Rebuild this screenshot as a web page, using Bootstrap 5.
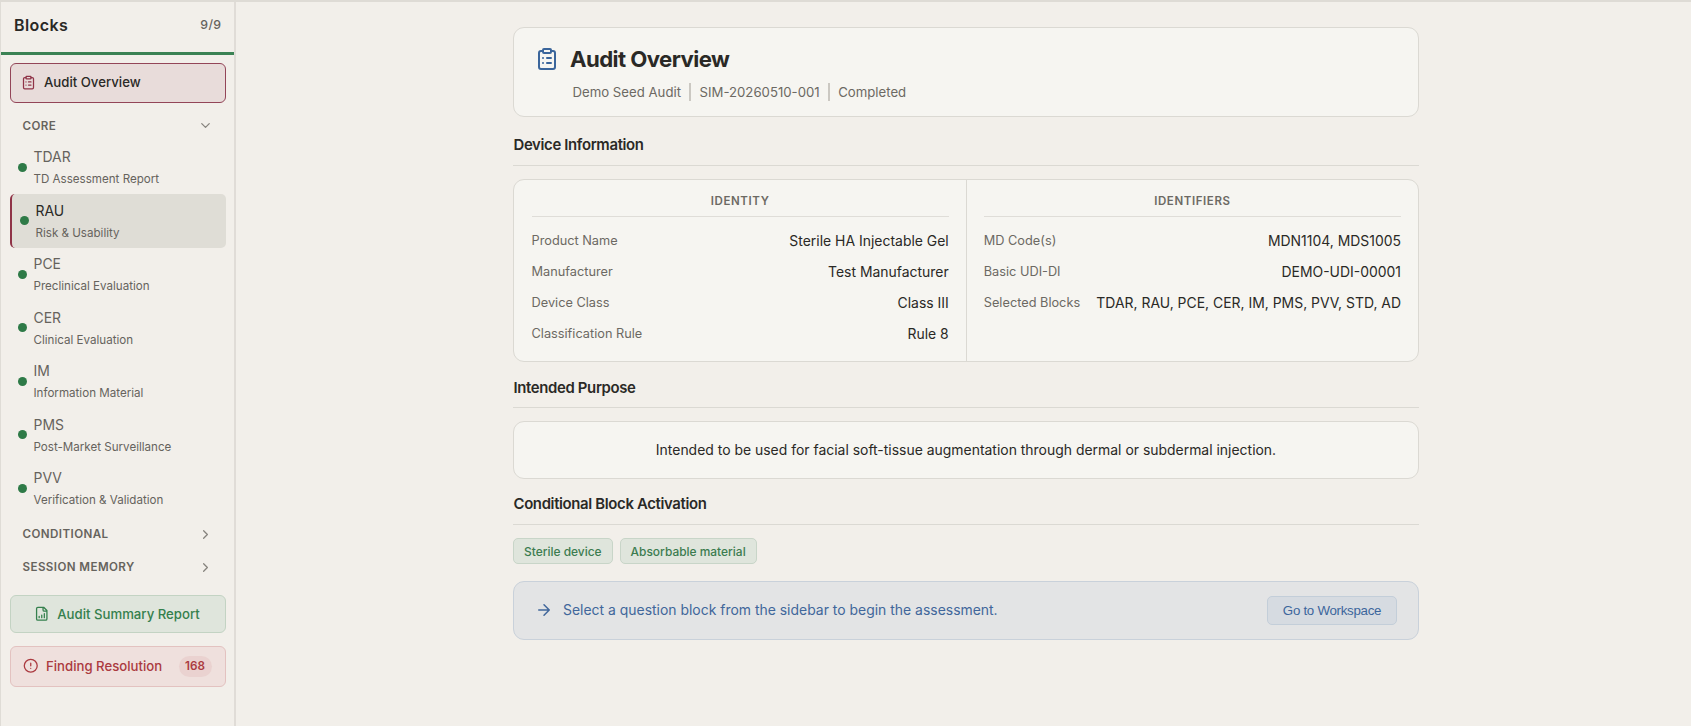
<!DOCTYPE html>
<html lang="en">
<head>
<meta charset="utf-8">
<title>Audit Overview</title>
<link rel="stylesheet" href="https://cdn.jsdelivr.net/npm/bootstrap@5.3.0/dist/css/bootstrap.min.css">
<style>
  :root { --line:#dbd9d3; --ink:#2a2926; --muted:#66635d; --green:#2e7a47; --wine:#8f3347; --blue:#3a659b; }
  body { font-family:Inter,sans-serif; font-size:13.95px; line-height:20px; color:var(--ink); background:#f2efea; height:726px; border-top:2px solid #dedbd5; overflow:hidden; }
  svg { fill:none; stroke:currentColor; stroke-width:2; stroke-linecap:round; stroke-linejoin:round; flex:none; display:block; }
  .sidebar { width:235.5px; border-left:1px solid #dfdcd6; border-right:2px solid #e0dcd7; }
  .side-head { height:53px; padding:0 12px 5px 13px; border-bottom:3px solid #3b8254; }
  .side-head h1 { font-size:16px; font-weight:600; letter-spacing:.4px; line-height:20px; }
  .count { font-size:12.3px; font-weight:500; letter-spacing:.4px; color:var(--muted); }
  .side-body { padding:8px 8px 0 9px; }
  .pill-link { border:1px solid; border-radius:6px; font-size:13.2px; font-weight:500; }
  .overview { height:40px; background:#e8dcda; border-color:#934558; padding:0 0 2px 10px; gap:8px; margin-bottom:8px; }
  .overview svg, .wine { color:var(--wine); }
  .group { height:33px; padding:0 13px 0 12.5px; font-size:11.6px; font-weight:600; letter-spacing:.42px; color:var(--muted); }
  .group.open { height:29.5px; }
  .group svg { color:#86837d; }
  .block-list { margin-bottom:2.5px; }
  .block-item { height:53.5px; padding:0 0 0 8px; gap:6.5px; color:var(--muted); border-radius:5px; }
  .block-item .dot { width:9px; height:9px; border-radius:50%; background:var(--green); flex:none; }
  .block-item .code { font-size:13.95px; line-height:20px; margin-top:.6px; }
  .block-item .desc { font-size:11.6px; line-height:18px; margin-top:3px; }
  .block-item.current { background:#dfddd6; border-left:2px solid var(--wine); }
  .block-item.current .code { color:var(--ink); }
  .report { height:38px; margin-top:11px; background:#dfe5dc; border-color:#c3d3c3; color:#35804d; padding-right:1.5px; gap:7.5px; }
  .finding { height:41px; margin-top:13px; background:#efe0dd; border-color:#e3c2c0; color:#ab3a40; padding:0 13px 0 12px; gap:7.5px; }
  .total { background:#ead2d0; border-radius:11px; height:21px; line-height:21px; width:33px; font-size:11.7px; font-weight:600; }
  .page { width:906px; margin-left:277.5px; padding-top:25px; }
  .panel { background:#f6f5f1; border:1px solid var(--line); border-radius:11px; }
  .hero { height:90px; padding:18px 21px; }
  .hero h2 { font-size:22.2px; font-weight:700; letter-spacing:-.58px; line-height:26px; margin:0 0 0 11px; }
  .hero svg { color:var(--blue); }
  .meta { font-size:13.2px; color:#6c6963; margin:11px 0 0 37.5px; line-height:18px; }
  .meta span + span { border-left:2px solid #cbc8c2; margin-left:8.3px; padding-left:8.2px; }
  .section-title { font-size:14.9px; font-weight:600; letter-spacing:-.34px; line-height:20px; border-bottom:1px solid var(--line); margin:0; text-indent:.5px; }
  .facts > div { flex:1 1 0; padding:11px 17px 0 17.5px; }
  .facts > div + div { border-left:1px solid var(--line); padding:11px 17px 0; }
  .facts h4 { font-size:11.5px; font-weight:600; letter-spacing:.6px; color:#6c6963; text-align:center; line-height:20px; padding-bottom:5px; border-bottom:1px solid #dfddd8; margin-bottom:8px; }
  .fact { height:31px; }
  .fact dt { font-size:12.75px; font-weight:400; color:#6c6963; }
  .fact dd { margin:0; }
  .chip { height:26px; line-height:25px; border:1px solid #c8d5c8; border-radius:5px; background:#dfe5dc; color:#3c7c50; font-size:11.95px; font-weight:500; padding:0 10px; }
  .banner { height:58.5px; margin-top:17px; padding:0 21px; background:#e3e4e5; border:1px solid #c9d1da; border-radius:11px; color:#41679b; }
  .go { height:29px; width:130px; padding:0; background:#d6dbe1; border:1px solid #c3ced9; border-radius:5px; color:#3c669c; font:13.3px/27px "Liberation Sans",sans-serif; letter-spacing:-.28px; }
</style>
</head>
<body>
<div class="d-flex h-100">
  <nav class="sidebar flex-shrink-0">
    <div class="side-head d-flex align-items-center justify-content-between">
      <h1 class="m-0">Blocks</h1><span class="count">9/9</span>
    </div>
    <div class="side-body">
      <a class="pill-link overview d-flex align-items-center text-reset text-decoration-none">
        <svg width="15" height="15" viewBox="0 0 24 24"><rect x="8" y="2" width="8" height="4" rx="1"/><path d="M16 4h2a2 2 0 0 1 2 2v14a2 2 0 0 1-2 2H6a2 2 0 0 1-2-2V6a2 2 0 0 1 2-2h2M12 11h4M12 16h4M8 11h.01M8 16h.01"/></svg>
        Audit Overview
      </a>
      <div class="group open d-flex align-items-center justify-content-between">CORE
        <svg width="15" height="15" viewBox="0 0 24 24"><path d="m6 9 6 6 6-6"/></svg></div>
      <div class="block-list">
        <div class="block-item d-flex align-items-center"><i class="dot"></i><div><div class="code">TDAR</div><div class="desc">TD Assessment Report</div></div></div>
        <div class="block-item current d-flex align-items-center"><i class="dot"></i><div><div class="code">RAU</div><div class="desc">Risk &amp; Usability</div></div></div>
        <div class="block-item d-flex align-items-center"><i class="dot"></i><div><div class="code">PCE</div><div class="desc">Preclinical Evaluation</div></div></div>
        <div class="block-item d-flex align-items-center"><i class="dot"></i><div><div class="code">CER</div><div class="desc">Clinical Evaluation</div></div></div>
        <div class="block-item d-flex align-items-center"><i class="dot"></i><div><div class="code">IM</div><div class="desc">Information Material</div></div></div>
        <div class="block-item d-flex align-items-center"><i class="dot"></i><div><div class="code">PMS</div><div class="desc">Post-Market Surveillance</div></div></div>
        <div class="block-item d-flex align-items-center"><i class="dot"></i><div><div class="code">PVV</div><div class="desc">Verification &amp; Validation</div></div></div>
      </div>
      <div class="group d-flex align-items-center justify-content-between">CONDITIONAL
        <svg width="15" height="15" viewBox="0 0 24 24"><path d="m9 18 6-6-6-6"/></svg></div>
      <div class="group d-flex align-items-center justify-content-between">SESSION MEMORY
        <svg width="15" height="15" viewBox="0 0 24 24"><path d="m9 18 6-6-6-6"/></svg></div>
      <a class="pill-link report d-flex align-items-center justify-content-center text-decoration-none">
        <svg width="15.5" height="15.5" viewBox="0 0 24 24"><path d="M15 2H6a2 2 0 0 0-2 2v16a2 2 0 0 0 2 2h12a2 2 0 0 0 2-2V7zM14 2v4a2 2 0 0 0 2 2h4M8 18v-2M12 18v-4M16 18v-6"/></svg>
        Audit Summary Report
      </a>
      <a class="pill-link finding d-flex align-items-center text-decoration-none">
        <svg width="15.5" height="15.5" viewBox="0 0 24 24"><circle cx="12" cy="12" r="10"/><path d="M12 8v4M12 16h.01"/></svg>
        Finding Resolution
        <span class="total ms-auto text-center">168</span>
      </a>
    </div>
  </nav>
  <main class="page">
    <header class="panel hero">
      <div class="d-flex align-items-center">
        <svg width="24" height="24" viewBox="0 0 24 24"><rect x="8" y="2" width="8" height="4" rx="1"/><path d="M16 4h2a2 2 0 0 1 2 2v14a2 2 0 0 1-2 2H6a2 2 0 0 1-2-2V6a2 2 0 0 1 2-2h2M12 11h4M12 16h4M8 11h.01M8 16h.01"/></svg>
        <h2>Audit Overview</h2>
      </div>
      <div class="meta d-flex"><span>Demo Seed Audit</span><span>SIM-20260510-001</span><span>Completed</span></div>
    </header>

    <h3 class="section-title" style="padding:18px 0 10px">Device Information</h3>
    <section class="panel facts d-flex" style="height:183px;margin-top:13px">
      <div>
        <h4>IDENTITY</h4>
        <dl class="m-0">
          <div class="fact d-flex align-items-center justify-content-between"><dt>Product Name</dt><dd>Sterile HA Injectable Gel</dd></div>
          <div class="fact d-flex align-items-center justify-content-between"><dt>Manufacturer</dt><dd>Test Manufacturer</dd></div>
          <div class="fact d-flex align-items-center justify-content-between"><dt>Device Class</dt><dd>Class III</dd></div>
          <div class="fact d-flex align-items-center justify-content-between"><dt>Classification Rule</dt><dd>Rule 8</dd></div>
        </dl>
      </div>
      <div>
        <h4>IDENTIFIERS</h4>
        <dl class="m-0">
          <div class="fact d-flex align-items-center justify-content-between"><dt>MD Code(s)</dt><dd>MDN1104, MDS1005</dd></div>
          <div class="fact d-flex align-items-center justify-content-between"><dt>Basic UDI-DI</dt><dd>DEMO-UDI-00001</dd></div>
          <div class="fact d-flex align-items-center justify-content-between"><dt>Selected Blocks</dt><dd>TDAR, RAU, PCE, CER, IM, PMS, PVV, STD, AD</dd></div>
        </dl>
      </div>
    </section>

    <h3 class="section-title" style="padding:16px 0 9px">Intended Purpose</h3>
    <section class="panel d-flex align-items-center justify-content-center" style="height:57.5px;margin-top:13px">Intended to be used for facial soft-tissue augmentation through dermal or subdermal injection.</section>

    <h3 class="section-title" style="padding:15.5px 0 10px">Conditional Block Activation</h3>
    <div class="d-flex" style="margin-top:13px;gap:7px"><span class="chip">Sterile device</span><span class="chip">Absorbable material</span></div>

    <div class="banner d-flex align-items-center">
      <svg width="18" height="18" viewBox="0 0 24 24"><path d="M5 12h14M12 5l7 7-7 7"/></svg>
      <span style="margin-left:10px">Select a question block from the sidebar to begin the assessment.</span>
      <button class="go ms-auto">Go to Workspace</button>
    </div>
  </main>
</div>
<script src="https://cdn.jsdelivr.net/npm/bootstrap@5.3.0/dist/js/bootstrap.bundle.min.js"></script>
</body>
</html>
